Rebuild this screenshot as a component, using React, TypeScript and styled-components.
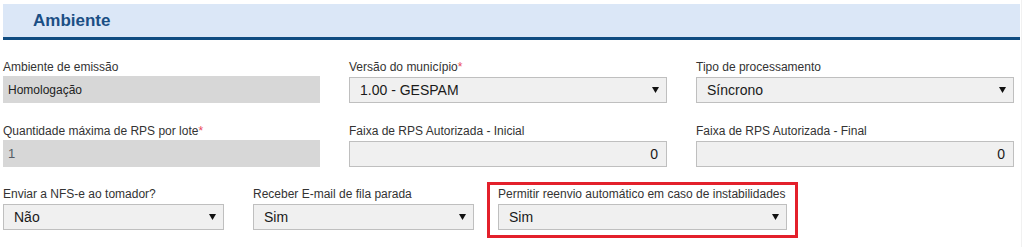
import React from 'react';
import styled, { createGlobalStyle } from 'styled-components';

// ===== GLOBAL =====
const GlobalStyle = createGlobalStyle`
  html, body {
    margin: 0;
    padding: 0;
    background: #ffffff;
  }
  body {
    font-family: "Liberation Sans", Arial, sans-serif;
    color: #333333;
  }
`;

// ===== STYLED COMPONENTS =====
const Page = styled.div`
  width: 1022px;
  height: 247px;
  box-sizing: border-box;
  padding: 4px 1px 0 3px;
  border-right: 1px solid #f1f1f1;
  overflow: hidden;
`;

const SectionHeader = styled.div`
  display: flex;
  align-items: center;
  height: 33px;
  padding-left: 30px;
  background: #dbe7f7;
  border-bottom: 3px solid #0f4c81;
`;

const SectionTitle = styled.h2`
  margin: 0;
  font-size: 17px;
  font-weight: 700;
  color: #1b4f85;
  line-height: 20px;
`;

const FormBody = styled.div`
  padding-top: 20px;
`;

const Grid = styled.div`
  display: grid;
  grid-template-columns: 317px 318px 318px;
  column-gap: 29px;
  row-gap: 21px;
`;

const Row = styled.div`
  display: flex;
  align-items: flex-start;
  gap: 29px;
  margin-top: 20px;
`;

const Field = styled.div<{ width?: number }>`
  display: flex;
  flex-direction: column;
  width: ${props => (props.width ? `${props.width}px` : 'auto')};
`;

const Highlight = styled.div`
  margin: -5px 0 0 -16px;
  padding: 2px 8px 5px 8px;
  border: 3px solid #e3202b;
`;

const Label = styled.label`
  display: block;
  font-size: 12px;
  line-height: 14px;
  height: 14px;
  margin-bottom: 2px;
  color: #333333;
  white-space: nowrap;
`;

const Required = styled.span`
  color: #ea4a5a;
`;

const ReadOnlyBox = styled.div<{ large?: boolean }>`
  display: flex;
  align-items: center;
  height: 27px;
  box-sizing: border-box;
  padding: 0 5px;
  background: #d7d7d7;
  font-size: ${props => (props.large ? '13px' : '12px')};
  color: ${props => (props.large ? '#555c66' : '#222222')};
`;

const SelectBox = styled.div`
  display: flex;
  align-items: center;
  justify-content: space-between;
  height: 26px;
  margin-top: 1px;
  box-sizing: border-box;
  padding: 0 7px 0 10px;
  background: #f0f0f0;
  border: 1px solid #bfbfbf;
  font-size: 14px;
  color: #1a1a1a;
`;

const NumberBox = styled.div`
  display: flex;
  align-items: center;
  justify-content: flex-end;
  height: 26px;
  margin-top: 1px;
  box-sizing: border-box;
  padding: 0 8px;
  background: #f0f0f0;
  border: 1px solid #bfbfbf;
  font-size: 14px;
  color: #1a1a1a;
`;

const Caret = () => (
  <svg width="7" height="6" viewBox="0 0 7 6">
    <polygon points="0,0 7,0 3.5,6" fill="#111111" />
  </svg>
);

const Select: React.FC<{ value: string }> = ({ value }) => (
  <SelectBox>
    <span>{value}</span>
    <Caret />
  </SelectBox>
);

// ===== COMPONENTE =====
export default function App() {
  return (
    <>
      <GlobalStyle />
      <Page>
        <SectionHeader>
          <SectionTitle>Ambiente</SectionTitle>
        </SectionHeader>

        <FormBody>
          <Grid>
            <Field>
              <Label>Ambiente de emissão</Label>
              <ReadOnlyBox>Homologação</ReadOnlyBox>
            </Field>
            <Field>
              <Label>
                Versão do município<Required>*</Required>
              </Label>
              <Select value="1.00 - GESPAM" />
            </Field>
            <Field>
              <Label>Tipo de processamento</Label>
              <Select value="Síncrono" />
            </Field>

            <Field>
              <Label>
                Quantidade máxima de RPS por lote<Required>*</Required>
              </Label>
              <ReadOnlyBox large>1</ReadOnlyBox>
            </Field>
            <Field>
              <Label>Faixa de RPS Autorizada - Inicial</Label>
              <NumberBox>0</NumberBox>
            </Field>
            <Field>
              <Label>Faixa de RPS Autorizada - Final</Label>
              <NumberBox>0</NumberBox>
            </Field>
          </Grid>

          <Row>
            <Field width={221}>
              <Label>Enviar a NFS-e ao tomador?</Label>
              <Select value="Não" />
            </Field>
            <Field width={221}>
              <Label>Receber E-mail de fila parada</Label>
              <Select value="Sim" />
            </Field>
            <Highlight>
              <Field width={289}>
                <Label>Permitir reenvio automático em caso de instabilidades</Label>
                <Select value="Sim" />
              </Field>
            </Highlight>
          </Row>
        </FormBody>
      </Page>
    </>
  );
}
